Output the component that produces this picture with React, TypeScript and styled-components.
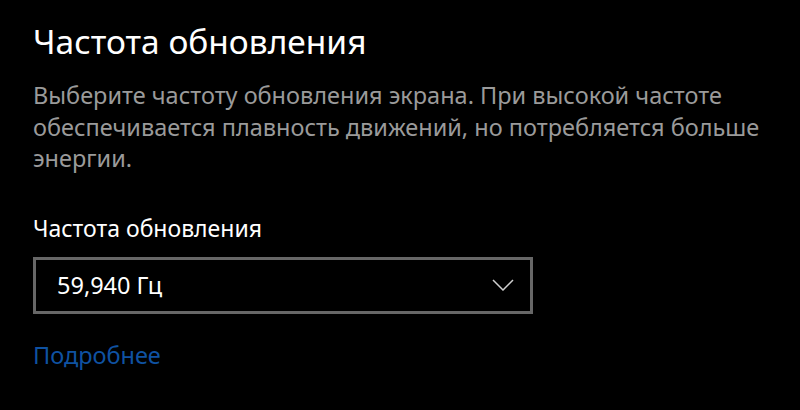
import styled, { createGlobalStyle } from "styled-components";

const GlobalStyle = createGlobalStyle`
  html, body {
    margin: 0;
    padding: 0;
    background: #000;
  }
  body {
    font-family: "Noto Sans", "Open Sans", "Liberation Sans", sans-serif;
    -webkit-font-smoothing: antialiased;
  }
`;

const Page = styled.div`
  width: 800px;
  height: 410px;
  background: #000;
  padding: 19px 0 0 33px;
  box-sizing: border-box;
  display: flex;
  flex-direction: column;
`;

const Title = styled.h1`
  margin: 0;
  font-size: 33.5px;
  line-height: 44px;
  font-weight: 400;
  color: #fff;
`;

const Description = styled.p`
  margin: 17px 0 0;
  width: 750px;
  font-size: 23.5px;
  line-height: 31.5px;
  color: #9a9a9a;
`;

const Label = styled.div`
  margin-top: 38px;
  font-size: 23px;
  line-height: 30px;
  color: #fff;
`;

const Select = styled.div`
  margin-top: 14px;
  width: 500px;
  height: 57px;
  box-sizing: border-box;
  border: 3px solid #676767;
  display: flex;
  align-items: center;
  justify-content: space-between;
  padding: 0 16px 0 21px;
  color: #fff;
  font-size: 23.5px;
`;

const Chevron = styled.svg`
  width: 22px;
  height: 12px;
`;

const Link = styled.a`
  margin-top: 26px;
  font-size: 23.5px;
  line-height: 30px;
  color: #0f52a2;
  text-decoration: none;
  align-self: flex-start;
`;

export default function App() {
  return (
    <>
      <GlobalStyle />
      <Page>
        <Title>Частота обновления</Title>
        <Description>
          Выберите частоту обновления экрана. При высокой частоте
          обеспечивается плавность движений, но потребляется больше энергии.
        </Description>
        <Label>Частота обновления</Label>
        <Select>
          <span>59,940 Гц</span>
          <Chevron viewBox="0 0 22 12">
            <path d="M1 1 L11 11 L21 1" fill="none" stroke="#cfcfcf" strokeWidth="1.5" />
          </Chevron>
        </Select>
        <Link href="#">Подробнее</Link>
      </Page>
    </>
  );
}
